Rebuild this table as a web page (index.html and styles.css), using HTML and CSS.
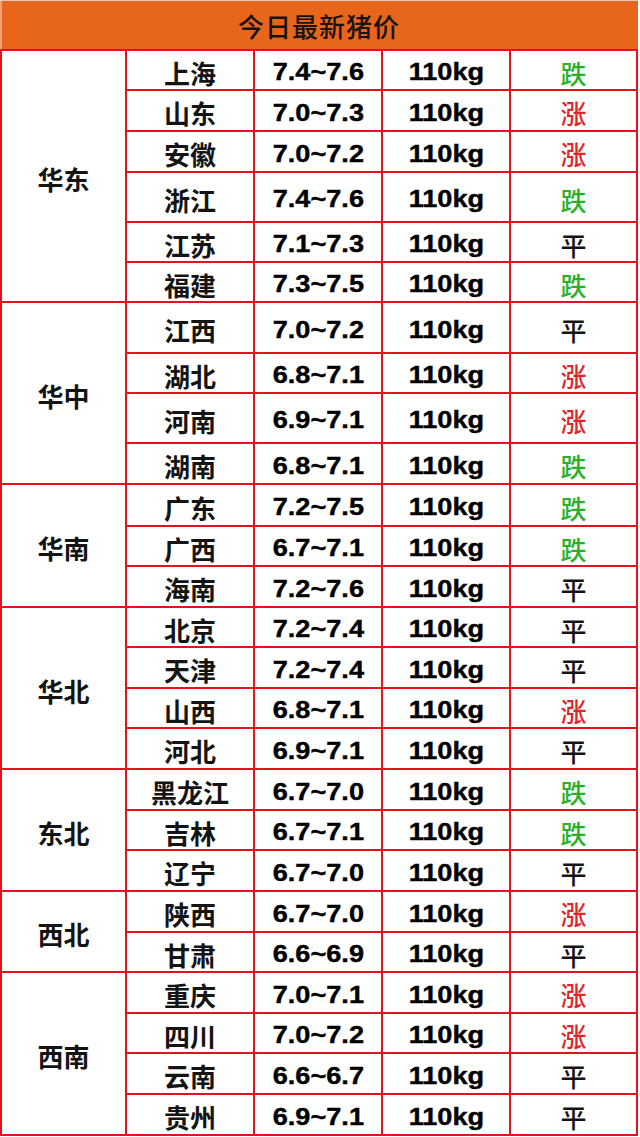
FILE: index.html
```html
<!DOCTYPE html>
<html lang="zh-CN">
<head>
<meta charset="utf-8">
<title>今日最新猪价</title>
<link rel="stylesheet" href="styles.css">
</head>
<body>
<div class="sheet">
  <div class="title">今日最新猪价</div>
  <div class="grid">
    <div class="region span6">华东</div>
    <div class="name">上海</div><div class="num"><span>7.4~7.6</span></div><div class="num"><span>110kg</span></div><div class="trend down">跌</div>
    <div class="name">山东</div><div class="num"><span>7.0~7.3</span></div><div class="num"><span>110kg</span></div><div class="trend up">涨</div>
    <div class="name">安徽</div><div class="num"><span>7.0~7.2</span></div><div class="num"><span>110kg</span></div><div class="trend up">涨</div>
    <div class="name">浙江</div><div class="num"><span>7.4~7.6</span></div><div class="num"><span>110kg</span></div><div class="trend down">跌</div>
    <div class="name">江苏</div><div class="num"><span>7.1~7.3</span></div><div class="num"><span>110kg</span></div><div class="trend flat">平</div>
    <div class="name">福建</div><div class="num"><span>7.3~7.5</span></div><div class="num"><span>110kg</span></div><div class="trend down">跌</div>

    <div class="region span4">华中</div>
    <div class="name">江西</div><div class="num"><span>7.0~7.2</span></div><div class="num"><span>110kg</span></div><div class="trend flat">平</div>
    <div class="name">湖北</div><div class="num"><span>6.8~7.1</span></div><div class="num"><span>110kg</span></div><div class="trend up">涨</div>
    <div class="name">河南</div><div class="num"><span>6.9~7.1</span></div><div class="num"><span>110kg</span></div><div class="trend up">涨</div>
    <div class="name">湖南</div><div class="num"><span>6.8~7.1</span></div><div class="num"><span>110kg</span></div><div class="trend down">跌</div>

    <div class="region span3">华南</div>
    <div class="name">广东</div><div class="num"><span>7.2~7.5</span></div><div class="num"><span>110kg</span></div><div class="trend down">跌</div>
    <div class="name">广西</div><div class="num"><span>6.7~7.1</span></div><div class="num"><span>110kg</span></div><div class="trend down">跌</div>
    <div class="name">海南</div><div class="num"><span>7.2~7.6</span></div><div class="num"><span>110kg</span></div><div class="trend flat">平</div>

    <div class="region span4">华北</div>
    <div class="name">北京</div><div class="num"><span>7.2~7.4</span></div><div class="num"><span>110kg</span></div><div class="trend flat">平</div>
    <div class="name">天津</div><div class="num"><span>7.2~7.4</span></div><div class="num"><span>110kg</span></div><div class="trend flat">平</div>
    <div class="name">山西</div><div class="num"><span>6.8~7.1</span></div><div class="num"><span>110kg</span></div><div class="trend up">涨</div>
    <div class="name">河北</div><div class="num"><span>6.9~7.1</span></div><div class="num"><span>110kg</span></div><div class="trend flat">平</div>

    <div class="region span3">东北</div>
    <div class="name">黑龙江</div><div class="num"><span>6.7~7.0</span></div><div class="num"><span>110kg</span></div><div class="trend down">跌</div>
    <div class="name">吉林</div><div class="num"><span>6.7~7.1</span></div><div class="num"><span>110kg</span></div><div class="trend down">跌</div>
    <div class="name">辽宁</div><div class="num"><span>6.7~7.0</span></div><div class="num"><span>110kg</span></div><div class="trend flat">平</div>

    <div class="region span2">西北</div>
    <div class="name">陕西</div><div class="num"><span>6.7~7.0</span></div><div class="num"><span>110kg</span></div><div class="trend up">涨</div>
    <div class="name">甘肃</div><div class="num"><span>6.6~6.9</span></div><div class="num"><span>110kg</span></div><div class="trend flat">平</div>

    <div class="region span4">西南</div>
    <div class="name">重庆</div><div class="num"><span>7.0~7.1</span></div><div class="num"><span>110kg</span></div><div class="trend up">涨</div>
    <div class="name">四川</div><div class="num"><span>7.0~7.2</span></div><div class="num"><span>110kg</span></div><div class="trend up">涨</div>
    <div class="name">云南</div><div class="num"><span>6.6~6.7</span></div><div class="num"><span>110kg</span></div><div class="trend flat">平</div>
    <div class="name">贵州</div><div class="num"><span>6.9~7.1</span></div><div class="num"><span>110kg</span></div><div class="trend flat">平</div>
  </div>
</div>
</body>
</html>
```

FILE: styles.css
```css
html, body {
  margin: 0;
  padding: 0;
  background: #ffffff;
}

.sheet {
  width: 638px;
}

.title {
  height: 48px;
  border-top: 1px solid #d8c8c0;
  background: #e8651c;
  box-shadow: inset 2px 0 0 #f3a07a;
  display: flex;
  align-items: center;
  justify-content: center;
  font-family: "Noto Sans CJK SC", sans-serif;
  font-size: 26px;
  font-weight: 500;
  color: #1a120e;
  letter-spacing: 1px;
}

.grid {
  display: grid;
  grid-template-columns: 123px 126px 126px 126px 125px;
  grid-template-rows: 38px 39px 39px 48px 38px 38px 49px 38px 48px 39px 40px 38px 39px 38px 39px 38px 39px 39px 38px 39px 39px 38px 39px 38px 39px 39px;
  gap: 2px;
  padding: 2px;
  background: #e3121c;
}

.grid > div {
  background: #ffffff;
  display: flex;
  align-items: center;
  justify-content: center;
  padding-top: 4px;
  box-sizing: border-box;
}

.region {
  font-family: "Noto Sans CJK SC", sans-serif;
  font-size: 26px;
  font-weight: 700;
  color: #141414;
}

.span6 { grid-row: span 6; }
.span4 { grid-row: span 4; }
.span3 { grid-row: span 3; }
.span2 { grid-row: span 2; }

.name {
  font-family: "Noto Sans CJK SC", sans-serif;
  font-size: 26px;
  font-weight: 600;
  color: #141414;
}

.num {
  font-family: "Liberation Sans", Arial, sans-serif;
  font-size: 24px;
  font-weight: 700;
  color: #000000;
}

.num span {
  display: inline-block;
  transform: scaleX(1.13);
  -webkit-text-stroke: 0.4px #000000;
}

.trend {
  font-family: "Noto Sans CJK SC", sans-serif;
  font-size: 26px;
  font-weight: 500;
}

.down { color: #2bb02b; }
.up { color: #e0262c; }
.flat { color: #141414; }
```
